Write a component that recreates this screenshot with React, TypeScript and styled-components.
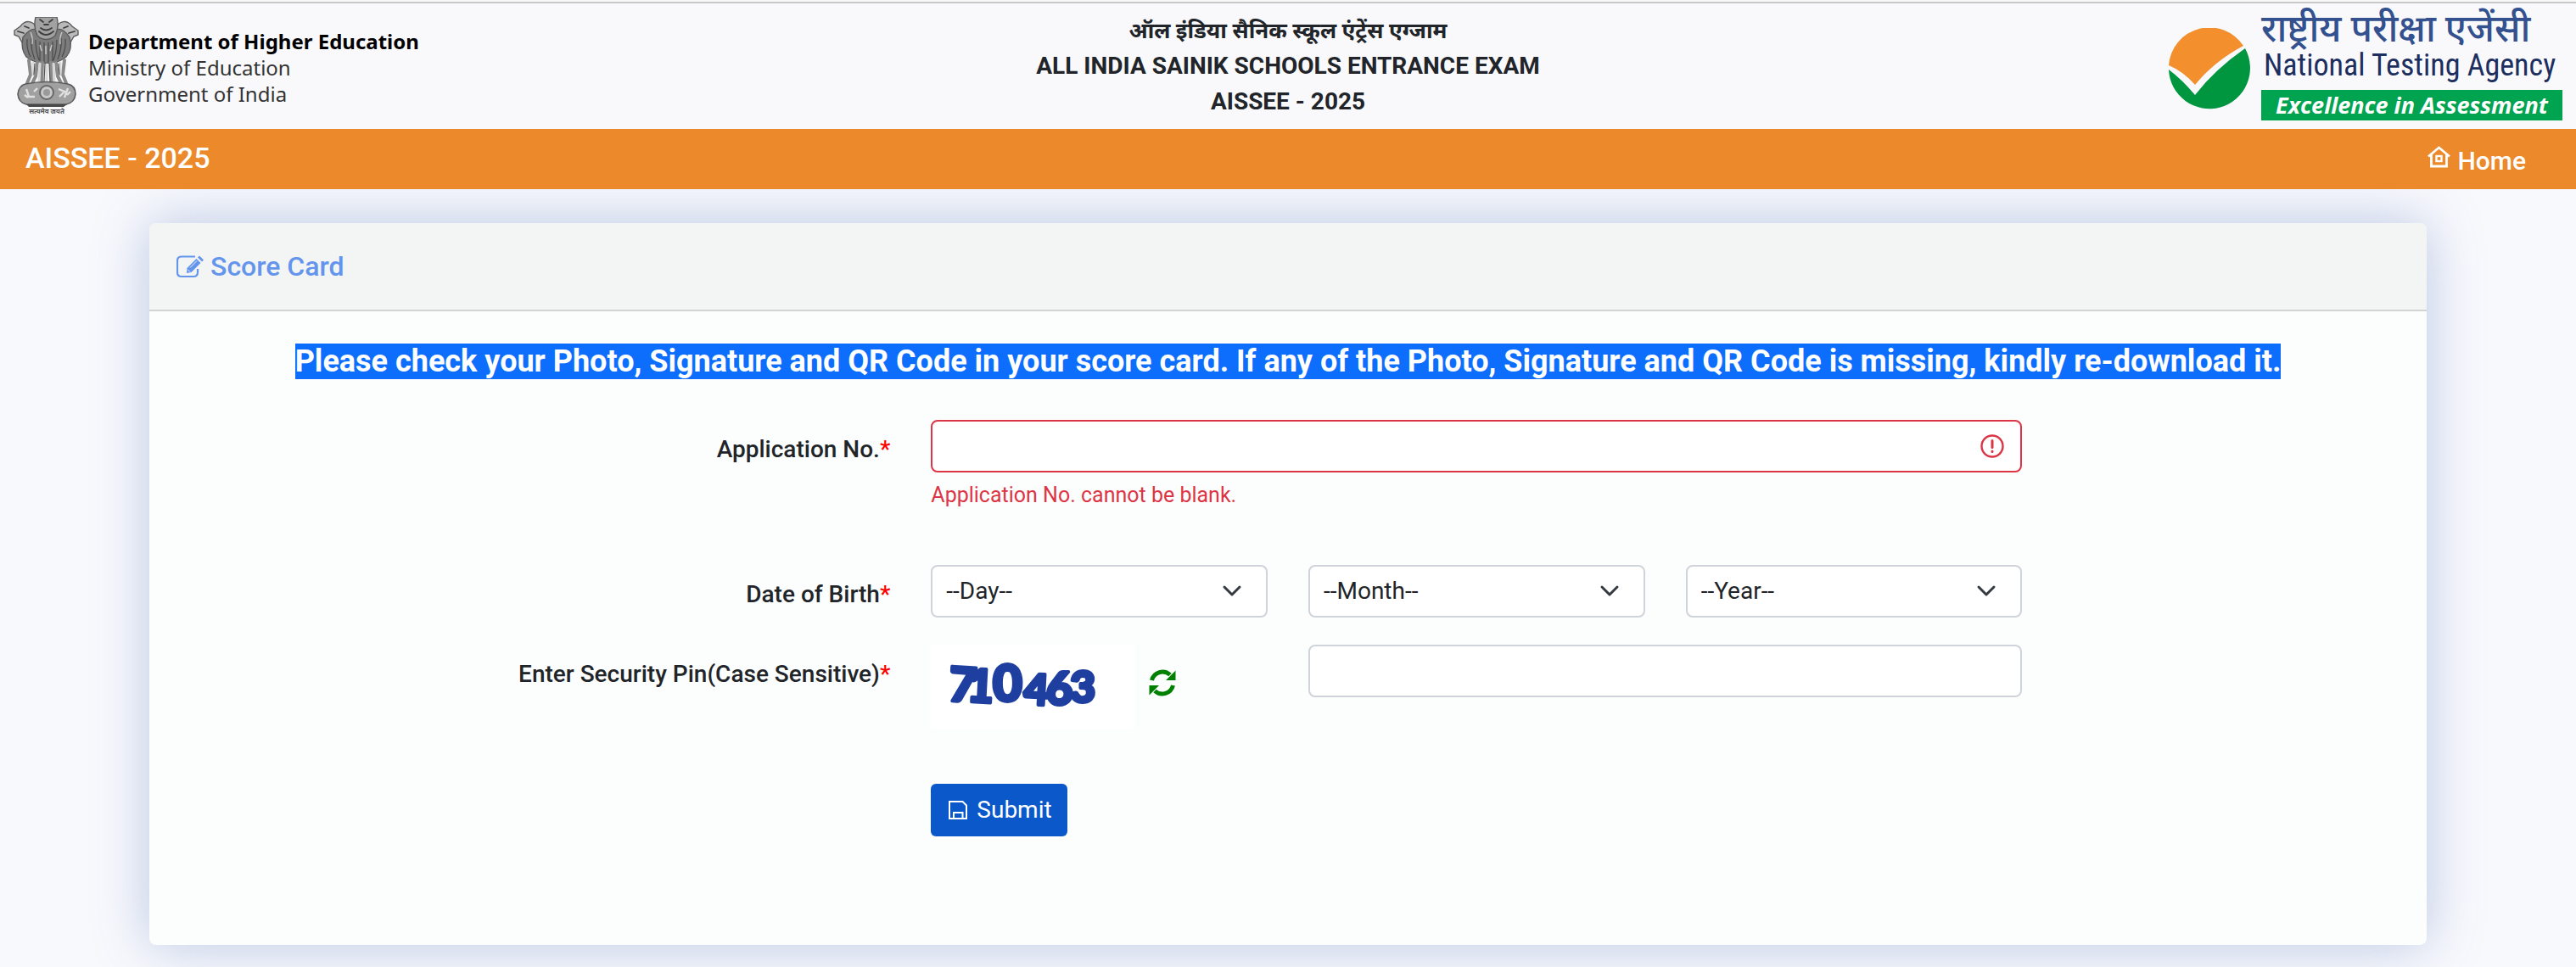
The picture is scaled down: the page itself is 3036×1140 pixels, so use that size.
import React from "react";
import styled, { createGlobalStyle } from "styled-components";

const ink = "#212529";
const danger = "#dc3545";

const GlobalStyle = createGlobalStyle`
  *, *::before, *::after { box-sizing: border-box; }
  body {
    margin: 0;
    background: #f8f9fd;
    color: ${ink};
    font-family: Roboto, "Noto Sans Devanagari", "Noto Sans", sans-serif;
    font-size: 28px;
    line-height: 42px;
  }
`;

const Page = styled.div`
  min-height: 100vh;
  border-top: 2px solid #f8f8f8;
`;

const Header = styled.header`
  display: grid;
  grid-template-columns: 1fr auto 1fr;
  align-items: center;
  height: 150px;
  padding: 0 16px;
  border-top: 2px solid #c8c8c8;
  background: #f9f9fc;
`;

const Ministry = styled.div`
  display: flex;
  align-items: center;
  gap: 11px;
`;

const MinistryText = styled.p`
  margin: 0;
  padding-top: 2px;
  color: #333;
  font-family: "Noto Sans", "Open Sans", sans-serif;
  font-size: 24px;
  line-height: 31px;

  strong {
    display: block;
    color: #000;
  }

  span {
    display: block;
  }
`;

const ExamTitle = styled.h1`
  margin: 0;
  font-size: 28px;
  font-weight: 700;
  line-height: 42px;
  text-align: center;

  span {
    display: block;
  }

  span:lang(hi) {
    font-size: 26px;
  }
`;

const Agency = styled.div`
  display: flex;
  justify-content: flex-end;
  align-items: center;
  gap: 13px;

  svg {
    margin-top: 6px;
  }
`;

const AgencyText = styled.div`
  display: flex;
  flex-direction: column;
  width: 355px;
  white-space: nowrap;
`;

const AgencyHindi = styled.span`
  color: #34518f;
  font-size: 44px;
  font-weight: 500;
  line-height: 40px;
`;

const AgencyName = styled.span`
  padding-left: 3px;
  color: #1d2f5f;
  font-family: "Liberation Sans Narrow", "Roboto Condensed", Roboto, sans-serif;
  font-size: 36px;
  line-height: 46px;
`;

const AgencyMotto = styled.span`
  margin-top: 6px;
  background: #00a34f;
  color: #fff;
  font-family: "Open Sans", sans-serif;
  font-size: 27px;
  font-style: italic;
  font-weight: 700;
  line-height: 36px;
  text-align: center;
`;

const NavBar = styled.nav`
  position: relative;
  display: flex;
  justify-content: space-between;
  align-items: center;
  height: 71px;
  padding: 0 59px 0 30px;
  background: #eb892b;
  color: #fff;
  font-weight: 500;
`;

const NavTitle = styled.span`
  padding-bottom: 4px;
  font-size: 34px;
`;

const HomeLink = styled.a`
  display: flex;
  align-items: center;
  gap: 8px;
  padding-top: 4px;
  color: #fff;
  font-size: 30px;
  text-decoration: none;

  svg {
    margin-bottom: 10px;
  }
`;

const Main = styled.main`
  padding: 40px 176px 24px;
`;

const Card = styled.section`
  border-radius: 8px;
  background: #fcfdfd;
  box-shadow: 0 0 64px rgba(70, 104, 176, 0.35);
`;

const CardHeader = styled.h2`
  display: flex;
  align-items: center;
  gap: 8px;
  height: 104px;
  margin: 0;
  padding: 0 32px;
  border-bottom: 2px solid #d3d5d5;
  border-radius: 8px 8px 0 0;
  background: #f3f4f4;
  color: #6495ed;
  font-size: 32px;
  font-weight: 500;
`;

const CardBody = styled.div`
  padding: 38px 32px 128px;
`;

const Notice = styled.p`
  margin: 0 0 47px;
  color: #fff;
  font-size: 36px;
  font-weight: 700;
  line-height: 43px;
  text-align: center;

  mark {
    background: #0d6efd;
    color: inherit;
  }
`;

const Form = styled.form`
  display: grid;
  gap: 32px;
`;

const Row = styled.div<{ $after?: number }>`
  display: grid;
  grid-template-columns: repeat(12, minmax(0, 1fr));
  column-gap: 48px;
  align-items: start;
  margin-bottom: ${(p) => p.$after ?? 0}px;
`;

const Cell = styled.div<{ $span: number; $start?: number }>`
  position: relative;
  grid-column: ${(p) => (p.$start ? `${p.$start} / span ${p.$span}` : `span ${p.$span}`)};
`;

const Label = styled.label`
  grid-column: span 4;
  padding-top: 14px;
  font-weight: 500;
  text-align: right;

  span {
    color: #f00;
  }
`;

const TextInput = styled.input<{ $invalid?: boolean }>`
  display: block;
  width: 100%;
  height: 62px;
  padding: 8px 16px;
  border: 2px solid ${(p) => (p.$invalid ? danger : "#ced4da")};
  border-radius: 8px;
  background: #fff;
  color: ${ink};
  font: inherit;
`;

const Select = styled.select`
  display: block;
  width: 100%;
  height: 62px;
  padding: 0 64px 0 16px;
  border: 2px solid #ced4da;
  border-radius: 8px;
  appearance: none;
  background: #fff;
  color: ${ink};
  font: inherit;
`;

const FieldIcon = styled.svg<{ $right: number }>`
  position: absolute;
  top: 17px;
  right: ${(p) => p.$right}px;
  pointer-events: none;
`;

const ErrorText = styled.p`
  margin: 8px 0 0;
  color: ${danger};
  font-size: 25px;
  line-height: 37px;
`;

const Captcha = styled.div`
  display: flex;
  align-items: center;
  gap: 17px;
`;

const CaptchaImage = styled.svg`
  background: #fff;
`;

const RefreshButton = styled.button`
  display: flex;
  margin: 0;
  padding: 0 0 10px;
  border: 0;
  background: none;
  color: #008000;
`;

const SubmitButton = styled.button`
  display: flex;
  align-items: center;
  gap: 11px;
  height: 62px;
  padding: 0 18px 0 21px;
  border: 0;
  border-radius: 6px;
  background: #0b58ca;
  color: #fff;
  font: inherit;
`;

function Emblem() {
  return (
    <svg width="77" height="116" viewBox="0 0 77 116" role="img" aria-label="State Emblem of India">
      <g fill="#8d8d8d" stroke="#5c5c5c" strokeWidth="1.4">
        <path d="M8 11 Q15 2 24 8 L30 22 L22 34 L10 30 L6 23 L1 21 L1 16 Z" fill="#b9b9b9" />
        <path d="M69 11 Q62 2 53 8 L47 22 L55 34 L67 30 L71 23 L76 21 L76 16 Z" fill="#b9b9b9" />
        <path d="M11 24 Q20 12 27 15 L50 15 Q58 12 66 24 Q70 38 62 47 Q50 56 39 54 Q27 56 15 47 Q8 38 11 24 Z" fill="#7c7c7c" />
        <path d="M26 0 H51 Q54 12 49 22 Q38 31 28 22 Q23 12 26 0 Z" fill="#a2a2a2" />
      </g>
      <g fill="none" stroke="#3e3e3e" strokeWidth="1.8" strokeLinecap="round">
        <path d="M31 3 L35 6 M46 3 L42 6 M36 9 H41 M30 17 Q38 25 47 17 M32 13 Q38 18 45 13" />
        <path d="M5 17 L12 19 M13 11 L18 13 M72 17 L65 19 M64 11 L59 13" />
      </g>
      <g fill="none" stroke="#4b4b4b" strokeWidth="1.2">
        <path d="M16 26 Q15 38 20 47 M21 25 Q20 38 25 50 M26 27 Q26 40 30 51 M31 29 V52 M36 30 V53 M41 30 V53 M46 29 V52 M51 27 Q51 40 47 51 M56 25 Q57 38 52 50 M61 26 Q62 38 57 47" />
      </g>
      <path d="M20 18 Q23 24 22 32 M57 18 Q54 24 55 32 M31 33 L33 40 M45 33 L43 40 M38 34 V44" stroke="#c9c9c9" strokeWidth="1.4" fill="none" />
      <g fill="none" strokeLinecap="round">
        <path d="M18 51 L20 68 L16 78 M28 54 L26 70 L22 78 M34 54 L33 78 M44 54 L45 78 M50 54 L52 70 L56 78 M60 51 L58 68 L62 78" stroke="#8a8a8a" strokeWidth="4" />
        <path d="M23 54 L23 68 M31 55 L30 76 M39 56 V77 M47 55 L48 76 M55 54 L55 68" stroke="#d7d7d7" strokeWidth="3" />
        <path d="M37 55 L36 76 M42 55 L43 76 M25 55 L24 68 M53 55 L54 68" stroke="#555" strokeWidth="1.2" />
      </g>
      <path d="M14 79 Q39 74 64 79 Q73 81 73 91 Q72 101 62 103 H15 Q6 101 5 91 Q6 81 14 79 Z" fill="#a0a0a0" stroke="#5a5a5a" strokeWidth="1.6" />
      <circle cx="39" cy="89" r="8" fill="#c9c9c9" stroke="#686868" strokeWidth="2" />
      <circle cx="39" cy="89" r="4" fill="#9a9a9a" />
      <path d="M15 85 L18 94 H25 M13 92 L17 95 M28 84 L24 88 M53 85 L60 88 L54 94 M64 84 L60 95 M67 88 L63 92" fill="none" stroke="#e0e0e0" strokeWidth="2.4" />
      <path d="M15 103 H63 L59 106 H18 Z" fill="#484848" />
      <text x="39" y="114" textAnchor="middle" fontSize="8" fontWeight="700" fill="#555">सत्यमेव जयते</text>
    </svg>
  );
}

function AgencyMark() {
  return (
    <svg width="96" height="96" viewBox="0 0 96 96" role="img" aria-label="NTA">
      <path d="M0 44 A48 48 0 0 1 88 21 Q54 39 31 67 Q17 51 0 44 Z" fill="#f38f2d" />
      <path d="M0 49 Q16 61 31 79 Q54 49 90 24 A48 48 0 1 1 0 49 Z" fill="#009640" />
    </svg>
  );
}

function HomeIcon() {
  return (
    <svg width="27" height="26" viewBox="0 0 27 26" fill="none" stroke="#fff" aria-hidden="true">
      <path d="M1 12.5 L13.5 2 L26 12.5 M4.5 10 V24 H22.5 V10" strokeWidth="2.8" />
      <rect x="10.5" y="12" width="6" height="6" strokeWidth="2.4" />
    </svg>
  );
}

function EditIcon() {
  return (
    <svg width="32" height="27" viewBox="0 0 32 27" aria-hidden="true">
      <path d="M22 1.500 H6 Q1 1.500 1 6.500 V20 Q1 25 6 25 H20 Q25 25 25 20 V16" fill="none" stroke="#6495ed" strokeWidth="2.2" />
      <path d="M12 21 L12.500 15 L23.500 4 L28.500 9 L17.500 20 Z" fill="#6495ed" />
      <path d="M25 2.500 L27 .5 L32 5.500 L30 7.500 Z" fill="#6495ed" />
      <path d="M16 14.500 L24 6.500 M13.500 17 L16 19.500" stroke="#f3f4f4" strokeWidth="1" />
    </svg>
  );
}

function RefreshIcon() {
  return (
    <svg width="32" height="32" viewBox="0 0 32 32" aria-hidden="true">
      <g fill="none" stroke="currentColor" strokeWidth="5">
        <path d="M3.500 13 A13 13 0 0 1 25 6.500" />
        <path d="M28.500 19 A13 13 0 0 1 7 25.500" />
      </g>
      <path d="M31.500 1.500 V13 H20 Z M.5 30.500 V19 H12 Z" fill="currentColor" />
    </svg>
  );
}

function SaveIcon() {
  return (
    <svg width="22" height="22" viewBox="0 0 22 22" fill="none" stroke="#fff" strokeWidth="2" aria-hidden="true">
      <path d="M1 1 H16.500 L21 5.500 V21 H1 Z M6 21 V14 H16.500 V21" />
    </svg>
  );
}

function CaptchaDigits() {
  return (
    <CaptchaImage
      width="240"
      height="100"
      viewBox="0 0 240 100"
      fill="#1f3fa0"
      stroke="#1f3fa0"
      strokeWidth="4"
      strokeLinejoin="round"
      fontFamily="Lato, sans-serif"
      fontWeight="900"
    >
      <text x="20" y="66" fontSize="56" transform="rotate(4 20 66)">7</text>
      <text x="42" y="67" fontSize="54" transform="rotate(3 42 67)">1</text>
      <text x="73" y="67" fontSize="60">0</text>
      <text x="109" y="70" fontSize="50" transform="rotate(3 109 70)">4</text>
      <text x="136" y="71" fontSize="54">6</text>
      <text x="164" y="68" fontSize="52">3</text>
    </CaptchaImage>
  );
}

function DateSelect({ name }: { name: string }) {
  return (
    <Cell $span={2}>
      <Select aria-label={name} defaultValue="">
        <option value="">{`--${name}--`}</option>
      </Select>
      <FieldIcon $right={30} width="24" height="28" viewBox="0 0 24 28" fill="none" stroke="#343a40" strokeWidth="3" strokeLinecap="round" strokeLinejoin="round">
        <path d="M3 9 L12 18 L21 9" />
      </FieldIcon>
    </Cell>
  );
}

export default function App() {
  return (
    <Page>
      <GlobalStyle />
      <Header>
        <Ministry>
          <Emblem />
          <MinistryText>
            <strong>Department of Higher Education</strong>
            <span>Ministry of Education</span>
            <span>Government of India</span>
          </MinistryText>
        </Ministry>
        <ExamTitle>
          <span lang="hi">ऑल इंडिया सैनिक स्कूल एंट्रेंस एग्जाम</span>
          <span>ALL INDIA SAINIK SCHOOLS ENTRANCE EXAM</span>
          <span>AISSEE - 2025</span>
        </ExamTitle>
        <Agency>
          <AgencyMark />
          <AgencyText>
            <AgencyHindi lang="hi">राष्ट्रीय परीक्षा एजेंसी</AgencyHindi>
            <AgencyName>National Testing Agency</AgencyName>
            <AgencyMotto>Excellence in Assessment</AgencyMotto>
          </AgencyText>
        </Agency>
      </Header>
      <NavBar>
        <NavTitle>AISSEE - 2025</NavTitle>
        <HomeLink href="#home">
          <HomeIcon />
          Home
        </HomeLink>
      </NavBar>
      <Main>
        <Card>
          <CardHeader>
            <EditIcon />
            Score Card
          </CardHeader>
          <CardBody>
            <Notice>
              <mark>
                Please check your Photo, Signature and QR Code in your score card. If any of the Photo, Signature and QR Code is missing, kindly re-download it.
              </mark>
            </Notice>
            <Form onSubmit={(e) => e.preventDefault()}>
              <Row $after={32}>
                <Label htmlFor="application">
                  Application No.<span>*</span>
                </Label>
                <Cell $span={6}>
                  <TextInput id="application" type="text" $invalid aria-invalid="true" aria-describedby="application-error" />
                  <FieldIcon $right={21} width="28" height="28" viewBox="0 0 28 28" fill="none" stroke={danger} strokeWidth="2.4" strokeLinecap="round">
                    <circle cx="14" cy="14" r="12.5" />
                    <path d="M14 7.500 V15.500 M14 20 V20.500" strokeWidth="3" />
                  </FieldIcon>
                  <ErrorText id="application-error">Application No. cannot be blank.</ErrorText>
                </Cell>
              </Row>
              <Row>
                <Label as="div">
                  Date of Birth<span>*</span>
                </Label>
                <DateSelect name="Day" />
                <DateSelect name="Month" />
                <DateSelect name="Year" />
              </Row>
              <Row $after={32}>
                <Label htmlFor="pin">
                  Enter Security Pin(Case Sensitive)<span>*</span>
                </Label>
                <Cell $span={2}>
                  <Captcha>
                    <CaptchaDigits />
                    <RefreshButton type="button" aria-label="Refresh security pin">
                      <RefreshIcon />
                    </RefreshButton>
                  </Captcha>
                </Cell>
                <Cell $span={4}>
                  <TextInput id="pin" type="text" />
                </Cell>
              </Row>
              <Row>
                <Cell $start={5} $span={6}>
                  <SubmitButton type="submit">
                    <SaveIcon />
                    Submit
                  </SubmitButton>
                </Cell>
              </Row>
            </Form>
          </CardBody>
        </Card>
      </Main>
    </Page>
  );
}
